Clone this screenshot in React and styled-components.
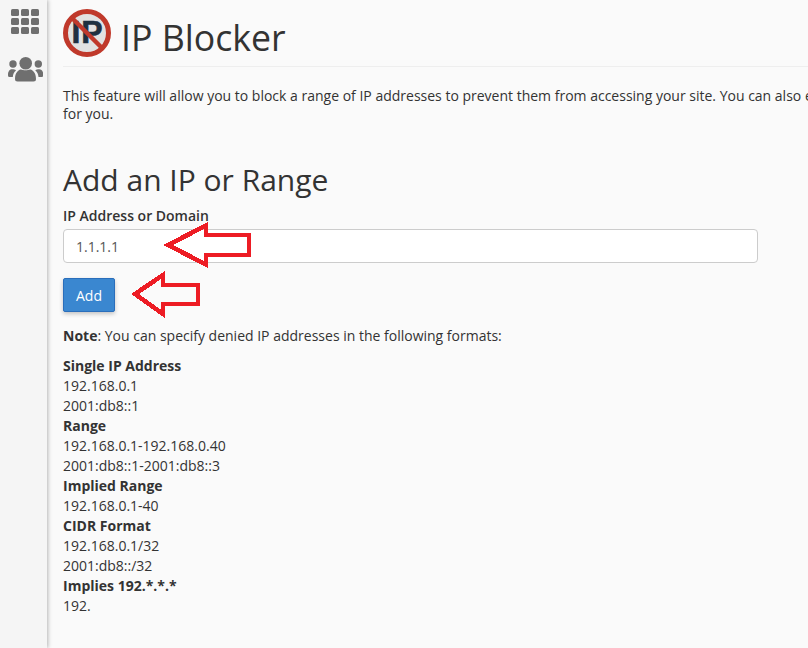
import React from "react";
import styled, { createGlobalStyle } from "styled-components";

const Global = createGlobalStyle`
  html, body { margin: 0; padding: 0; background: #fafafa; }
  body { font-family: "Open Sans", "Liberation Sans", sans-serif; font-size: 14px; line-height: 20px; color: #333; }
`;
const Page = styled.div`
  position: relative; width: 808px; height: 648px; overflow: hidden; display: flex; background: #fafafa;
`;
const Sidebar = styled.nav`
  width: 47px; flex: none; background: #f5f5f5; box-shadow: 1px 0 4px rgba(0,0,0,.28);
  display: flex; flex-direction: column; padding: 9px 0 0 8px; box-sizing: border-box; z-index: 1;
`;
const Grid = styled.span`
  display: grid; grid-template-columns: repeat(3, 8px); grid-auto-rows: 7px; gap: 2px 2px;
  margin: 0 0 23px 3px; width: 28px;
  i { background: #6f6f6f; border-radius: 1.5px; }
`;
const Main = styled.main`
  flex: none; width: 1400px; padding-left: 16px; box-sizing: border-box;
`;
const Header = styled.header`
  display: flex; align-items: center; gap: 10px; height: 66px; border-bottom: 1px solid #eeeeee;
`;
const Title = styled.h1`
  margin: 0; font-size: 35.7px; line-height: 50px; font-weight: 400; color: #333; position: relative; top: 4px;
`;
const Intro = styled.p`
  margin: 20px 0 0; width: 1270px; line-height: 18px;
`;
const Section = styled.h2`
  margin: 37px 0 0; font-size: 30px; line-height: 40px; font-weight: 400; color: #333;
`;
const Form = styled.div`
  width: 695px; margin-top: 6px;
`;
const Label = styled.label`
  display: block; font-weight: 600; color: #333; line-height: 20px;
`;
const Input = styled.input`
  display: block; width: 100%; height: 34px; box-sizing: border-box; margin-top: 3px; padding: 0 12px;
  border: 1px solid #ccc; border-radius: 4px; background: #fff; font: inherit; color: #555; outline: 0;
`;
const Button = styled.button`
  display: block; margin-top: 15px; width: 52px; height: 34px; border: 1px solid #2a6ebb; border-radius: 2px;
  background: #3a87d0; color: #fff; font: inherit; padding: 1px 0 0; box-shadow: 0 2px 4px rgba(0,0,0,.22);
`;
const Note = styled.p`
  margin: 14px 0 0;
  strong { font-weight: 700; }
`;
const Formats = styled.dl`
  margin: 10px 0 0;
  dt { font-weight: 700; }
  dd { margin: 0; }
`;
const Arrows = styled.svg`
  position: absolute; left: 0; top: 0; pointer-events: none; z-index: 2;
`;

const Users = () => (
  <svg width="35" height="25" viewBox="0 0 35 25" fill="#6f6f6f" aria-hidden="true">
    <circle cx="17.7" cy="6.3" r="6.3" />
    <path d="M7 22C7 15 11 12.5 13 12.5C15 13.5 20 13.5 22 12.5C24 12.5 28 15 28 22a2.5 2.5 0 0 1-2.5 2.5h-16A2.5 2.5 0 0 1 7 22Z" />
    <circle cx="5" cy="7" r="3.7" />
    <circle cx="30.3" cy="7" r="3.7" />
    <path d="M0 18C0 14 2 12.3 4 12.3C6 12.3 7 12.5 8 13.5C6 15 5 17 4.8 20H1.5A1.5 1.5 0 0 1 0 18.5Z" />
    <path d="M35.3 18C35.3 14 33.3 12.3 31.3 12.3C29.3 12.3 28.3 12.5 27.3 13.5C29.3 15 30.3 17 30.5 20H33.8A1.5 1.5 0 0 0 35.3 18.5Z" />
  </svg>
);

const Logo = () => (
  <svg width="48" height="48" viewBox="0 0 48 48" aria-hidden="true">
    <circle cx="24" cy="24" r="21.5" fill="#e2e2e2" stroke="#c0392b" strokeWidth="5" />
    <text x="24.5" y="34" textAnchor="middle" fontFamily="'Liberation Sans', sans-serif" fontWeight="700" fontSize="32" fill="#1f3040" stroke="#1f3040" strokeWidth="0.6" letterSpacing="1">IP</text>
    <line x1="9" y1="9" x2="39" y2="39" stroke="#c0392b" strokeWidth="4.5" />
  </svg>
);

const sections = [
  ["Single IP Address", ["192.168.0.1", "2001:db8::1"]],
  ["Range", ["192.168.0.1-192.168.0.40", "2001:db8::1-2001:db8::3"]],
  ["Implied Range", ["192.168.0.1-40"]],
  ["CIDR Format", ["192.168.0.1/32", "2001:db8::/32"]],
  ["Implies 192.*.*.*", ["192."]],
];

export default function App() {
  return (
    <Page>
      <Global />
      <Sidebar>
        <Grid>{Array.from({ length: 9 }, (_, i) => <i key={i} />)}</Grid>
        <Users />
      </Sidebar>
      <Main>
        <Header>
          <Logo />
          <Title>IP Blocker</Title>
        </Header>
        <Intro>
          This feature will allow you to block a range of IP addresses to prevent them from accessing your site. You can also enter a fully qualified domain name, and the IP Blocker will attempt to resolve it for you.
        </Intro>
        <Section>Add an IP or Range</Section>
        <Form>
          <Label htmlFor="ip">IP Address or Domain</Label>
          <Input id="ip" defaultValue="1.1.1.1" />
          <Button>Add</Button>
        </Form>
        <Note><strong>Note</strong>: You can specify denied IP addresses in the following formats:</Note>
        <Formats>
          {sections.map(([t, lines]) => (
            <React.Fragment key={t}>
              <dt>{t}</dt>
              {lines.map((l) => <dd key={l}>{l}</dd>)}
            </React.Fragment>
          ))}
        </Formats>
      </Main>
      <Arrows width="808" height="648" viewBox="0 0 808 648" aria-hidden="true" shapeRendering="crispEdges">
        <polygon points="168,245 206,225.5 206,235 249,235 249,255 206,255 206,264.5" fill="none" stroke="#ed1c24" strokeWidth="4.6" strokeLinejoin="miter" />
        <polygon points="135,294 163,275 163,285 198,285 198,304 163,304 163,314" fill="none" stroke="#ed1c24" strokeWidth="4.6" strokeLinejoin="miter" />
      </Arrows>
    </Page>
  );
}
